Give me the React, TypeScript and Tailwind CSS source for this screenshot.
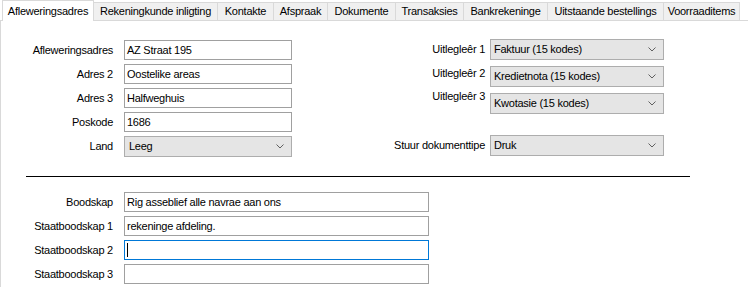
import React from 'react'

const tabs = [
  { label: 'Afleweringsadres', w: 'w-[92px]', active: true },
  { label: 'Rekeningkunde inligting', w: 'w-[124px]' },
  { label: 'Kontakte', w: 'w-[56px]' },
  { label: 'Afspraak', w: 'w-[54px]' },
  { label: 'Dokumente', w: 'w-[68px]' },
  { label: 'Transaksies', w: 'w-[68px]' },
  { label: 'Bankrekeninge', w: 'w-[84px]' },
  { label: 'Uitstaande bestellings', w: 'w-[116px]' },
  { label: 'Voorraaditems', w: 'w-[76px]' },
]

const Chevron = () => (
  <svg width="8" height="5" viewBox="0 0 8 5" className="shrink-0">
    <path d="M0.5 0.5 L4 4 L7.5 0.5" fill="none" stroke="#606060" strokeWidth="1" />
  </svg>
)

const TextBox = ({ value, w, focused }: { value?: string; w: string; focused?: boolean }) => (
  <div
    className={`${w} h-[20px] flex items-center px-[2px] bg-white border ${
      focused ? 'border-[#0078d7]' : 'border-[#a0a0a0]'
    }`}
  >
    {focused ? <span className="w-px h-[14px] bg-black" /> : value}
  </div>
)

const Combo = ({ value }: { value: string }) => (
  <div className="w-[174px] h-[21px] flex items-center justify-between pl-[3px] pr-[7px] bg-[#e5e5e5] border border-[#adadad]">
    <span>{value}</span>
    <Chevron />
  </div>
)

const Label = ({ children, w = 'w-[113px]' }: { children: React.ReactNode; w?: string }) => (
  <div className={`${w} shrink-0 text-right pr-[1px] mr-[10px]`}>{children}</div>
)

export default function App() {
  return (
    <div className="w-[748px] h-[287px] bg-white text-black text-[11px] leading-[13px] tracking-[-0.25px] overflow-hidden font-['Liberation_Sans',Arial,sans-serif]">
      {/* tab strip */}
      <div className="flex items-end h-[21px] pl-[2px] border-b border-[#d9d9d9]">
        {tabs.map((t) =>
          t.active ? (
            <div
              key={t.label}
              className={`${t.w} h-[21px] -mb-px bg-white border-l border-r border-t border-[#d9d9d9] flex items-center justify-center`}
            >
              {t.label}
            </div>
          ) : (
            <div
              key={t.label}
              className={`${t.w} h-[18px] bg-[#f0f0f0] border-t border-r border-[#d9d9d9] flex items-center justify-center`}
            >
              {t.label}
            </div>
          )
        )}
      </div>

      {/* panel */}
      <div className="h-[266px] border-l border-[#d9d9d9]">
        <div className="flex">
          {/* left column */}
          <div className="w-[291px] pt-[19px] flex flex-col gap-[4px]">
            {[
              ['Afleweringsadres', 'AZ Straat 195'],
              ['Adres 2', 'Oostelike areas'],
              ['Adres 3', 'Halfweghuis'],
              ['Poskode', '1686'],
            ].map(([l, v]) => (
              <div key={l} className="flex items-center">
                <Label>{l}</Label>
                <TextBox value={v} w="w-[168px]" />
              </div>
            ))}
            <div className="flex items-center">
              <Label>Land</Label>
              <div className="w-[169px] h-[21px] flex items-center justify-between pl-[4px] pr-[7px] bg-[#e5e5e5] border border-[#adadad]">
                <span>Leeg</span>
                <Chevron />
              </div>
            </div>
          </div>

          {/* right column */}
          <div className="pt-[18px] flex flex-col">
            <div className="flex items-center">
              <div className="w-[194px] text-right pr-[1px] mr-[4px]">Uitlegleêr 1</div>
              <Combo value="Faktuur (15 kodes)" />
            </div>
            <div className="flex items-start mt-[6px]">
              <div className="w-[194px] text-right pr-[1px] mr-[4px] mt-[1px]">Uitlegleêr 2</div>
              <Combo value="Kredietnota (15 kodes)" />
            </div>
            <div className="flex items-start mt-[6px]">
              <div className="w-[194px] text-right pr-[1px] mr-[4px] -mt-[3px]">Uitlegleêr 3</div>
              <Combo value="Kwotasie (15 kodes)" />
            </div>
            <div className="flex items-center mt-[21px]">
              <div className="w-[194px] text-right pr-[1px] mr-[4px]">Stuur dokumenttipe</div>
              <Combo value="Druk" />
            </div>
          </div>
        </div>

        {/* separator */}
        <div className="ml-[25px] mt-[19px] w-[664px] h-px bg-black" />

        {/* message rows */}
        <div className="pt-[15px] flex flex-col gap-[4px]">
          <div className="flex items-center">
            <Label>Boodskap</Label>
            <TextBox value="Rig asseblief alle navrae aan ons" w="w-[305px]" />
          </div>
          <div className="flex items-center">
            <Label>Staatboodskap 1</Label>
            <TextBox value="rekeninge afdeling." w="w-[305px]" />
          </div>
          <div className="flex items-center">
            <Label>Staatboodskap 2</Label>
            <TextBox w="w-[305px]" focused />
          </div>
          <div className="flex items-center">
            <Label>Staatboodskap 3</Label>
            <TextBox w="w-[305px]" />
          </div>
        </div>
      </div>
    </div>
  )
}
